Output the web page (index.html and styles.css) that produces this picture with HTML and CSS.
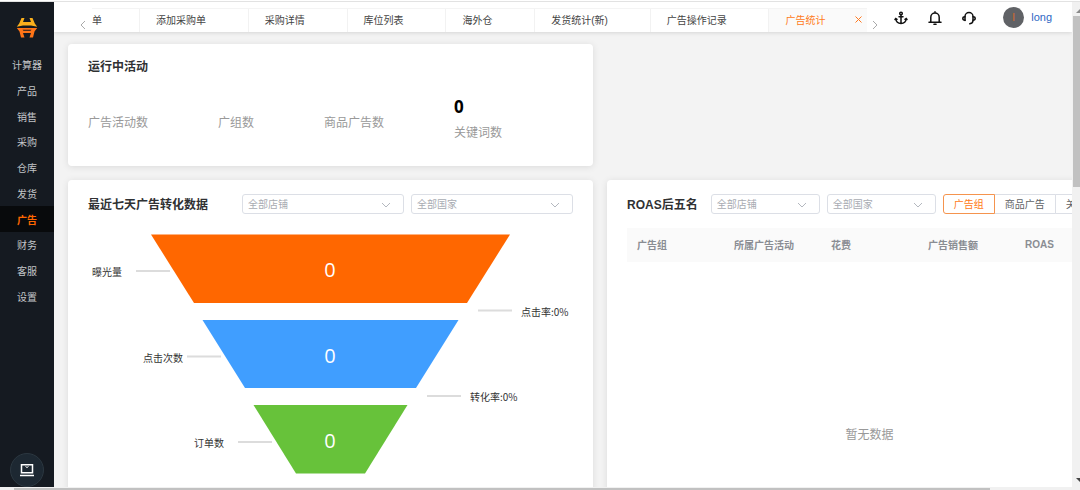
FILE: index.html
```html
<!DOCTYPE html>
<html lang="zh-CN">
<head>
    <meta charset="UTF-8">
    <meta name="viewport" content="width=device-width, initial-scale=1.0">
    <title>广告统计</title>
    <link rel="stylesheet" href="styles.css">
</head>
<body>
    <div class="app">
        <aside class="sidebar">
            <svg class="logo" width="22" height="22" viewBox="0 0 22 22">
                <path fill="#fbb01c" d="M5.500 1h3L7 5h8l-1.500-4h3l2.300 5.500 2.400 3.200L15 8.500H7L.8 9.700l2.400-3.200z"/>
                <path fill="#ff7417" d="M.8 11h20.400l-2.700 3.500-1.500 6h-3.500L15 16H7l1.500 4.500H5l-1.500-6z"/>
                <path fill="#151a21" d="M6.500 12.800h9l-1 1h-7z"/>
            </svg>
            <nav class="menu">
                <a href="#">计算器</a>
                <a href="#">产品</a>
                <a href="#">销售</a>
                <a href="#">采购</a>
                <a href="#">仓库</a>
                <a href="#">发货</a>
                <a href="#" class="active">广告</a>
                <a href="#">财务</a>
                <a href="#">客服</a>
                <a href="#">设置</a>
            </nav>
            <button class="screen-btn" aria-label="桌面">
                <svg width="16" height="14" viewBox="0 0 16 14" fill="none" stroke="#fff">
                    <path stroke-width="1.500" d="M2.500 1.800h11v8h-11z"/>
                    <path stroke-width="1.500" d="M1 12.500h14"/>
                    <path d="M6.500 3.500L8 4.500l1.500-1"/>
                </svg>
            </button>
        </aside>

        <div class="page">
            <header class="topbar">
                <button class="arrow prev" aria-label="向左">
                    <svg width="6" height="10" viewBox="0 0 6 10"><path d="M5 1L1 5l4 4"/></svg>
                </button>
                <div class="tabs">
                    <a href="#" class="tab first">单</a>
                    <a href="#" class="tab">添加采购单</a>
                    <a href="#" class="tab">采购详情</a>
                    <a href="#" class="tab">库位列表</a>
                    <a href="#" class="tab">海外仓</a>
                    <a href="#" class="tab">发货统计(新)</a>
                    <a href="#" class="tab">广告操作记录</a>
                    <a href="#" class="tab current">广告统计
                        <svg width="7" height="7" viewBox="0 0 7 7"><path d="M.5.5l6 6M6.500.5l-6 6"/></svg>
                    </a>
                </div>
                <button class="arrow next" aria-label="向右">
                    <svg width="6" height="10" viewBox="0 0 6 10"><path d="M1 1l4 4-4 4"/></svg>
                </button>
                <div class="tools">
                    <svg width="14" height="14" viewBox="0 0 14 14">
                        <circle cx="7" cy="2.500" r="1.300"/>
                        <path d="M7 4v8.500M5 5.800h4M1.800 7.800c.3 3 2.200 4.700 5.200 4.700s4.900-1.700 5.200-4.700M1 8.500l.8-1 1.200.8M13 8.500l-.8-1-1.200.8"/>
                    </svg>
                    <svg width="14" height="14" viewBox="0 0 14 14">
                        <path d="M2.800 11V6.200a4.200 4.200 0 0 1 8.400 0V11M1 11.200h12M7 .8v1M6 13.300h2"/>
                    </svg>
                    <svg width="14" height="14" viewBox="0 0 14 14">
                        <path d="M3 9.500V5.500a4 4 0 0 1 8 0v4c0 1.800-1.200 3-3.200 3.300"/>
                        <path d="M3 5.800c-1.600 0-2.200.8-2.200 1.700S1.400 9.200 3 9.200M11 5.800c1.600 0 2.200.8 2.200 1.700s-.6 1.700-2.200 1.700"/>
                    </svg>
                </div>
                <a href="#" class="user"><span class="avatar">l</span>long</a>
            </header>

            <main class="board">
                <section class="card running">
                    <h2>运行中活动</h2>
                    <div class="stats">
                        <div class="stat">广告活动数</div>
                        <div class="stat">广组数</div>
                        <div class="stat">商品广告数</div>
                        <div class="stat"><strong>0</strong>关键词数</div>
                    </div>
                </section>

                <section class="card funnel">
                    <div class="card-head">
                        <h2>最近七天广告转化数据</h2>
                        <div class="filters">
                            <div class="select">
                                <select aria-label="店铺"><option>全部店铺</option></select>
                                <svg width="10" height="6" viewBox="0 0 10 6"><path d="M1 1l4 4 4-4"/></svg>
                            </div>
                            <div class="select">
                                <select aria-label="国家"><option>全部国家</option></select>
                                <svg width="10" height="6" viewBox="0 0 10 6"><path d="M1 1l4 4 4-4"/></svg>
                            </div>
                        </div>
                    </div>
                    <svg class="chart" viewBox="0 0 485 240">
                        <polygon fill="#ff6700" points="63,0.500 422,0.500 379,69 106,69"/>
                        <polygon fill="#409eff" points="114.500,86 370.500,86 328,154 157,154"/>
                        <polygon fill="#67c23a" points="165.500,171 319.500,171 277,239.500 208,239.500"/>
                        <g class="value">
                            <text x="242" y="43">0</text>
                            <text x="242" y="129">0</text>
                            <text x="242" y="214">0</text>
                        </g>
                        <path class="lead" d="M48 37h34M99 122.500h34M150 208h34M390 76.500h34M339 162h34"/>
                        <g class="name">
                            <text x="4" y="42">曝光量</text>
                            <text x="55" y="128">点击次数</text>
                            <text x="106" y="213">订单数</text>
                            <text x="433" y="82">点击率:0%</text>
                            <text x="382" y="167">转化率:0%</text>
                        </g>
                    </svg>
                </section>

                <section class="card roas">
                    <div class="card-head">
                        <h2>ROAS后五名</h2>
                        <div class="filters">
                            <div class="select">
                                <select aria-label="店铺"><option>全部店铺</option></select>
                                <svg width="10" height="6" viewBox="0 0 10 6"><path d="M1 1l4 4 4-4"/></svg>
                            </div>
                            <div class="select">
                                <select aria-label="国家"><option>全部国家</option></select>
                                <svg width="10" height="6" viewBox="0 0 10 6"><path d="M1 1l4 4 4-4"/></svg>
                            </div>
                            <div class="switch">
                                <button class="on">广告组</button>
                                <button>商品广告</button>
                                <button>关键词</button>
                            </div>
                        </div>
                    </div>
                    <table>
                        <thead>
                            <tr><th>广告组</th><th>所属广告活动</th><th>花费</th><th>广告销售额</th><th>ROAS</th></tr>
                        </thead>
                        <tbody>
                            <tr><td colspan="5">暂无数据</td></tr>
                        </tbody>
                    </table>
                </section>
            </main>
        </div>

        <div class="vbar">
            <svg width="10" height="5" viewBox="0 0 10 5"><path fill="#8a8a8a" d="M0 5l5-5 5 5z"/></svg>
            <div class="vthumb"></div>
            <svg width="10" height="5" viewBox="0 0 10 5"><path fill="#444" d="M0 0l5 5 5-5z"/></svg>
        </div>
    </div>
    <div class="hbar"><div class="hthumb"></div></div>
</body>
</html>
```
FILE: styles.css
```css
* {
    box-sizing: border-box;
}
body {
    margin: 0;
    height: 100vh;
    display: flex;
    flex-direction: column;
    overflow: hidden;
    background: #fff;
    color: #333;
    font-family: "Liberation Sans", "Noto Sans CJK SC", sans-serif;
    font-size: 10px;
}
a {
    color: inherit;
    text-decoration: none;
}
button, select {
    font: inherit;
    margin: 0;
}
h2 {
    margin: 0;
    font-size: 12px;
    line-height: 22px;
    color: #303133;
    white-space: nowrap;
}

.app {
    flex: 1;
    min-height: 0;
    margin-top: 1px;
    border-top: 1px solid #e2e2e2;
    display: flex;
}

/* menu */
.sidebar {
    flex: none;
    width: 54px;
    background: #151a21;
    display: flex;
    flex-direction: column;
    align-items: center;
}
.logo {
    margin: 15px 0 13px;
}
.menu {
    width: 100%;
    height: 257px;
    display: flex;
    flex-direction: column;
}
.menu a {
    flex: 1;
    display: flex;
    align-items: center;
    justify-content: center;
    color: #c3c5c8;
}
.menu a.active {
    background: #080a0c;
    color: #ff6700;
    font-weight: bold;
}
.screen-btn {
    margin-top: auto;
    width: 34px;
    height: 34px;
    padding: 0;
    display: flex;
    align-items: center;
    justify-content: center;
    border: 1px solid #2b3740;
    border-radius: 50%;
    background: #1d2832;
}

/* top bar */
.page {
    flex: 1;
    min-width: 0;
    display: flex;
    flex-direction: column;
    background: #f3f3f3;
    overflow: hidden;
}
.topbar {
    flex: none;
    height: 30px;
    display: flex;
    align-items: center;
    background: #fff;
    box-shadow: 0 1px 4px rgba(0, 0, 0, .12);
}
.arrow {
    align-self: stretch;
    padding: 16px 6px 0;
    border: none;
    background: none;
    line-height: 0;
}
.arrow path {
    fill: none;
    stroke: #aaa;
}
.prev {
    width: 38px;
    text-align: right;
}
.next {
    width: 17px;
    padding: 16px 5px 0;
    text-align: left;
}
.tabs {
    flex: 1;
    align-self: flex-end;
    height: 24px;
    display: flex;
    border-top: 1px solid #f4f4f4;
    overflow: hidden;
}
.tab {
    flex: 1 0 auto;
    display: flex;
    align-items: center;
    padding: 0 40px 2px 16px;
    border-right: 1px solid #f2f2f2;
    color: #444;
    white-space: nowrap;
}
.tab.first {
    flex: 0 0 48px;
    padding: 0 0 2px;
}
.tab.current {
    padding-right: 5px;
    justify-content: space-between;
    gap: 28px;
    border: none;
    background: #fafafa;
    color: #ff7a20;
}
.tab path {
    fill: none;
    stroke: #ff7a20;
}
.tools {
    display: flex;
    gap: 20px;
    padding: 2px 27px 0 10px;
}
.tools svg {
    fill: none;
    stroke: #111;
    stroke-width: 1.500;
    stroke-linecap: round;
}
.user {
    display: flex;
    align-items: center;
    gap: 7px;
    padding-right: 20px;
    font-size: 11px;
    color: #2f67c4;
}
.avatar {
    width: 21px;
    height: 21px;
    border-radius: 50%;
    background: #606266;
    color: #e06a28;
    font-size: 10px;
    line-height: 21px;
    text-align: center;
}

/* cards */
.board {
    flex: 1;
    min-height: 0;
    display: grid;
    grid-template-columns: repeat(2, minmax(525px, 1fr));
    grid-template-rows: auto auto;
    gap: 14px;
    padding: 12px 14px;
}
.card {
    padding: 14px 20px;
    border-radius: 4px;
    background: #fff;
    box-shadow: 0 1px 7px rgba(0, 0, 0, .1);
}
.running {
    padding: 12px 20px 17px;
}
.funnel {
    grid-column: 1;
}
.stats {
    margin-top: 19px;
    display: flex;
    align-items: center;
    gap: 70px;
}
.stat {
    color: #999;
    font-size: 12px;
    line-height: 32px;
}
.stat strong {
    display: block;
    color: #000;
    font-family: "Open Sans", sans-serif;
    font-size: 17px;
    line-height: 20px;
}
.card-head {
    display: flex;
    justify-content: space-between;
    height: 20px;
}
.filters {
    display: flex;
    gap: 7px;
}
.select {
    position: relative;
    width: 162px;
}
.roas .card-head {
    justify-content: flex-start;
    gap: 13px;
}
.roas .select {
    width: 109px;
}
.select select {
    appearance: none;
    width: 100%;
    height: 20px;
    padding: 0 5px;
    border: 1px solid #dcdfe6;
    border-radius: 3px;
    background: #fff;
    color: #a8abb2;
}
.select svg {
    position: absolute;
    right: 13px;
    top: 8px;
    pointer-events: none;
}
.select path {
    fill: none;
    stroke: #b4b8bf;
}
.switch {
    display: flex;
}
.switch button {
    padding: 0 10px 2px;
    margin-left: -1px;
    border: 1px solid #dcdfe6;
    background: #fff;
    color: #606266;
    white-space: nowrap;
}
.switch button:first-child {
    margin-left: 0;
    border-radius: 3px 0 0 3px;
}
.switch button:last-child {
    border-radius: 0 3px 3px 0;
}
.switch .on {
    position: relative;
    border-color: #f5944e;
    color: #ff7a20;
}

/* funnel chart */
.chart {
    display: block;
    width: 100%;
    margin-top: 20px;
}
.value {
    fill: #fff;
    font-family: "Open Sans", sans-serif;
    font-size: 20px;
    text-anchor: middle;
}
.name {
    fill: #333;
    font-family: "Noto Sans CJK SC", sans-serif;
    font-size: 10px;
}
.lead {
    stroke: #dcdcdc;
    stroke-width: 2;
}

/* table */
table {
    width: 100%;
    margin-top: 14px;
    table-layout: fixed;
    border-collapse: collapse;
}
th {
    height: 34px;
    padding: 0 10px 2px;
    background: #fafafa;
    color: #8a8d93;
    text-align: left;
}
td {
    height: 344px;
    padding: 0 0 2px;
    color: #999;
    font-size: 12px;
    text-align: center;
}

/* scroll bars */
.vbar {
    flex: none;
    width: 8px;
    padding: 6px 0 4px 1px;
    display: flex;
    flex-direction: column;
    background: #f1f1f1;
    overflow: hidden;
}
.vbar svg {
    flex: none;
    margin-left: 3px;
}
.vthumb {
    height: 36%;
    margin: 3px 0 auto;
    background: #c1c1c1;
}
.hbar {
    flex: none;
    height: 3px;
    padding: 1px 90px 0 14px;
    background: #f1f1f1;
}
.hthumb {
    height: 2px;
    background: #c1c1c1;
}
```
